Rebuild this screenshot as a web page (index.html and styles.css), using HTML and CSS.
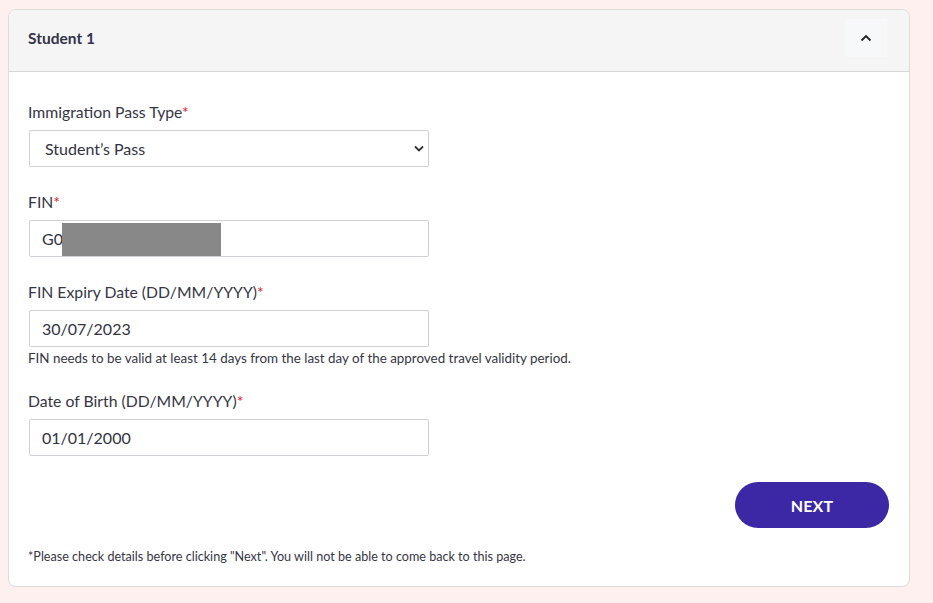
FILE: index.html
```html
<!DOCTYPE html>
<html lang="en">
<head>
<meta charset="utf-8">
<title>Student 1</title>
<link rel="stylesheet" href="styles.css">
</head>
<body>
<div class="page">
  <section class="card">
    <header class="card-head">
      <h2 class="card-title">Student 1</h2>
      <button class="toggle" type="button" aria-label="Collapse">
        <svg width="12" height="8" viewBox="0 0 12 8"><path d="M1.5 6.5 L6 2 L10.5 6.5" fill="none" stroke="#222" stroke-width="1.8"/></svg>
      </button>
    </header>
    <div class="card-body">
      <div class="field">
        <label class="label">Immigration Pass Type<span class="req">*</span></label>
        <select class="control select">
          <option>Student’s Pass</option>
        </select>
      </div>
      <div class="field">
        <label class="label">FIN<span class="req">*</span></label>
        <div class="redact-wrap">
          <input class="control" type="text" value="G0">
          <span class="redact"></span>
        </div>
      </div>
      <div class="field">
        <label class="label">FIN Expiry Date (DD/MM/YYYY)<span class="req">*</span></label>
        <input class="control" type="text" value="30/07/2023">
        <p class="hint">FIN needs to be valid at least 14 days from the last day of the approved travel validity period.</p>
      </div>
      <div class="field">
        <label class="label">Date of Birth (DD/MM/YYYY)<span class="req">*</span></label>
        <input class="control" type="text" value="01/01/2000">
      </div>
      <div class="actions">
        <button class="next" type="button">NEXT</button>
      </div>
      <p class="note">*Please check details before clicking "Next". You will not be able to come back to this page.</p>
    </div>
  </section>
</div>
</body>
</html>
```
FILE: styles.css
```css
* { box-sizing: border-box; }
html, body { margin: 0; padding: 0; background: #fdf0ef; }
body {
  font-family: Lato, "Open Sans", Arial, sans-serif;
  color: #363645;
  height: 603px;
  overflow: hidden;
}
.page { padding: 9px 24px 0 8px; }
.card {
  width: 902px;
  background: #fff;
  border: 1px solid #dcdcdc;
  border-radius: 8px;
  overflow: hidden;
}
.card-head {
  height: 62px;
  background: #f5f5f5;
  border-bottom: 1px solid #d6d6d6;
  display: flex;
  align-items: center;
  justify-content: space-between;
  padding: 0 22px 5px 19px;
}
.card-title {
  margin: 0;
  font-size: 15.5px;
  font-weight: 700;
  color: #33334a;
}
.toggle {
  width: 42px;
  height: 38px;
  border: none;
  background: #f7f8fa;
  display: flex;
  align-items: center;
  justify-content: center;
  padding: 0;
}
.card-body { padding: 30px 20px 21px 20px; }
.field { margin-bottom: 25px; }
.label {
  display: block;
  font-size: 15.75px;
  line-height: 20px;
  color: #363645;
  margin: 0 0 8px -1px;
}
.req { color: #e0242b; }
.control {
  display: block;
  width: 400px;
  height: 37px;
  border: 1px solid #d0d0d6;
  border-radius: 2px;
  background: #fff;
  font-family: Lato, "Open Sans", Arial, sans-serif;
  font-size: 16px;
  color: #33333f;
  padding: 0 12px;
  outline: none;
  margin: 0;
}
.select {
  appearance: none;
  -webkit-appearance: none;
  padding-left: 15px;
  background-image: url("data:image/svg+xml,%3Csvg xmlns='http://www.w3.org/2000/svg' width='10' height='7' viewBox='0 0 10 7'%3E%3Cpath d='M1 1.5 L5 5.5 L9 1.5' fill='none' stroke='%23333' stroke-width='1.8'/%3E%3C/svg%3E");
  background-repeat: no-repeat;
  background-position: right 4px center;
}
.redact-wrap { position: relative; width: 400px; }
.redact {
  position: absolute;
  left: 33px;
  top: 3px;
  width: 159px;
  height: 33px;
  background: #888888;
}
.hint {
  margin: 3px 0 0 -1px;
  font-size: 13.4px;
  line-height: 16px;
  color: #363645;
}
.actions {
  display: flex;
  justify-content: flex-end;
  padding-top: 1px;
}
.next {
  width: 154px;
  height: 46px;
  border: none;
  border-radius: 23px;
  background: #3c28a5;
  color: #fff;
  font-family: Lato, "Open Sans", Arial, sans-serif;
  font-size: 16px;
  font-weight: 700;
  letter-spacing: 0.2px;
}
.note {
  margin: 21px 0 0 -1px;
  font-size: 12.6px;
  line-height: 16px;
  color: #363645;
}
```
